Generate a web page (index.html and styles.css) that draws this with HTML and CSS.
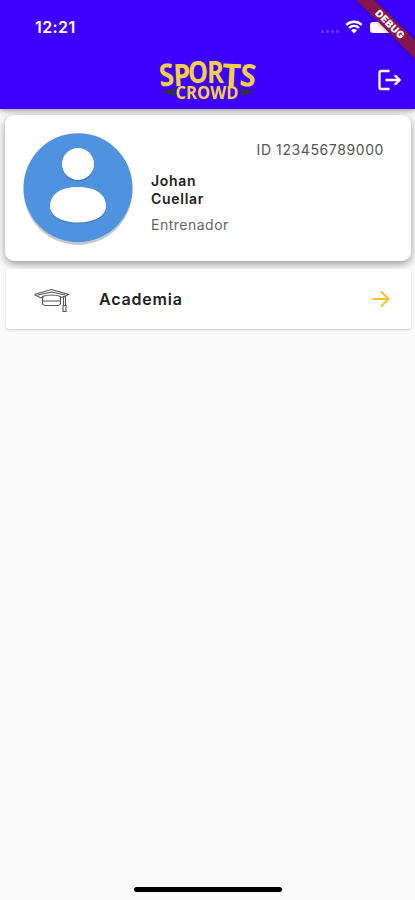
FILE: index.html
```html
<!DOCTYPE html>
<html lang="es">
<head>
    <meta charset="UTF-8">
    <meta name="viewport" content="width=device-width, initial-scale=1.0">
    <title>Sports Crowd</title>
    <link rel="stylesheet" href="styles.css">
</head>
<body>
    <div class="screen">
        <header class="header">
            <div class="status-bar">
                <span class="time">12:21</span>
                <div class="status-icons">
                    <div class="signal"><i></i><i></i><i></i><i></i></div>
                    <svg class="wifi" width="18" height="14" viewBox="0 0 18 14">
                        <path d="M1.3 4.9a11 11 0 0 1 15.4 0M4 8a7.1 7.1 0 0 1 10 0" fill="none" stroke="#fff" stroke-width="2.3"/>
                        <path d="M5.9 10.2a4.4 4.4 0 0 1 6.2 0L9 13.4z" fill="#fff"/>
                    </svg>
                    <div class="battery"></div>
                </div>
            </div>
            <div class="app-bar">
                <svg class="logo" width="100" height="44" viewBox="0 0 100 44">
                    <path d="M3 34l14-4v8zM97 34l-14-4v8z" fill="#343047"/>
                    <g class="logo-sports">
                        <text x="1" y="28" textLength="15" lengthAdjust="spacingAndGlyphs" transform="rotate(-5 8 18)">S</text>
                        <text x="15.5" y="28" textLength="17" lengthAdjust="spacingAndGlyphs" transform="rotate(-3 24 18)">P</text>
                        <text x="30" y="25" textLength="20" lengthAdjust="spacingAndGlyphs">O</text>
                        <text x="49" y="25" textLength="17" lengthAdjust="spacingAndGlyphs">R</text>
                        <text x="64" y="28" textLength="19" lengthAdjust="spacingAndGlyphs" transform="rotate(3 73 18)">T</text>
                        <text x="82" y="28.500" textLength="16" lengthAdjust="spacingAndGlyphs" transform="rotate(6 90 18)">S</text>
                    </g>
                    <text class="logo-crowd" x="17.500" y="40.500" textLength="63" lengthAdjust="spacingAndGlyphs">CROWD</text>
                </svg>
                <svg class="logout" width="24" height="22" viewBox="0 0 24 22" fill="none" stroke="#fff" stroke-width="2.300">
                    <path d="M12.500 2H4.200Q2.500 2 2.500 3.700V18.300Q2.500 20 4.200 20H12.500M8.500 11H22M17.800 6.300L22.500 11l-4.700 4.700"/>
                </svg>
            </div>
            <div class="debug-banner"><span>DEBUG</span></div>
        </header>

        <main class="content">
            <section class="profile-card">
                <svg class="avatar" width="110" height="113" viewBox="0 0 110 113">
                    <circle cx="55" cy="57.500" r="54.500" fill="#c9c9c9"/>
                    <circle cx="55" cy="54.700" r="54.500" fill="#4f92df"/>
                    <g fill="#3c74b5">
                        <circle cx="55" cy="32.500" r="15.800"/>
                        <path d="M27 75.500C27 62 39 56.500 55 56.500s28 5.500 28 19c0 8-11 15-28 15s-28-7-28-15z"/>
                    </g>
                    <g fill="#fff">
                        <circle cx="55" cy="31" r="16"/>
                        <path d="M27 73.500C27 60 39 54 55 54s28 6 28 19.500c0 9-11 16-28 16s-28-7-28-16z"/>
                    </g>
                </svg>
                <div class="profile-info">
                    <div class="profile-id">ID 123456789000</div>
                    <h1 class="profile-name">Johan<br>Cuellar</h1>
                    <div class="profile-role">Entrenador</div>
                </div>
            </section>

            <section class="menu-item">
                <svg class="cap" width="38" height="28" viewBox="0 0 38 28" fill="none" stroke="#555" stroke-width="1.100">
                    <path d="M1.500 7.500L18.500 2.500l17 5-5 2.500-3 .2M1.500 7.500l6 3.200 3-.3M5 8l13.500-3L32 8"/>
                    <path d="M9.500 9.500v7.500q1 1.500 3 1.500h12q2 0 3-1.500V9.500q-3-1.500-9-1.500t-9 1.500zM9.500 14h18"/>
                    <path d="M30.500 9v9M32.500 9v9M30 18.500h3v6h-3z"/>
                </svg>
                <span class="menu-label">Academia</span>
                <svg class="arrow" width="18" height="18" viewBox="0 0 18 18" fill="none" stroke="#fbc02d" stroke-width="2">
                    <path d="M.5 9H16M9 1.500L16.500 9 9 16.500"/>
                </svg>
            </section>
        </main>

        <div class="home-indicator"></div>
    </div>
</body>
</html>
```
FILE: styles.css
```css
* {
    margin: 0;
    padding: 0;
    box-sizing: border-box;
}

body {
    background-color: #fafafa;
    color: #222;
    font-family: Inter, "Liberation Sans", sans-serif;
}

.screen {
    height: 900px;
    display: flex;
    flex-direction: column;
    overflow: hidden;
}

/* Header */
.header {
    position: relative;
    height: 109px;
    background-color: #3d00ff;
    box-shadow: 0 2px 5px rgba(0, 0, 0, 0.35);
    overflow: hidden;
    flex: none;
}

.status-bar {
    height: 54px;
    display: flex;
    align-items: center;
    justify-content: space-between;
    padding: 0 19px 0 35px;
}

.time {
    color: #fff;
    font-size: 16px;
    font-weight: 600;
    letter-spacing: 0.4px;
}

.status-icons {
    display: flex;
    align-items: center;
}

.signal {
    display: flex;
    gap: 2px;
    margin: 9px 6px 0 0;
}

.signal i {
    width: 3px;
    height: 3px;
    border-radius: 1px;
    background-color: #6237ff;
}

.battery {
    width: 26px;
    height: 11px;
    margin-left: 7px;
    border-radius: 3px;
    background-color: #fff;
}

.app-bar {
    height: 55px;
    display: grid;
    grid-template-columns: 1fr 100px 1fr;
    padding: 4px 14px 0;
}

.logo {
    grid-column: 2;
    overflow: visible;
    font-family: "Open Sans", sans-serif;
    fill: #f3cf48;
}

.logo-sports {
    font-size: 31px;
    font-weight: 700;
}

.logo-crowd {
    font-size: 17.5px;
    font-weight: 700;
}

.logout {
    justify-self: end;
    margin-top: 11px;
}

.debug-banner {
    position: absolute;
    top: 18px;
    left: 330px;
    width: 120px;
    height: 13px;
    transform: rotate(45deg);
    background-color: #85154d;
    box-shadow: 0 0 5px rgba(0, 0, 0, 0.4);
    color: #fff;
    font-size: 10px;
    font-weight: 900;
    line-height: 13px;
    letter-spacing: 0.4px;
    text-align: center;
}

/* Content */
.content {
    padding: 6px 4px 0 5px;
    flex: 1;
}

.profile-card {
    display: flex;
    height: 146px;
    padding: 18px 27px 0 18px;
    border-radius: 9px;
    background-color: #fff;
    box-shadow: 0 3px 8px rgba(0, 0, 0, 0.4);
}

.avatar {
    flex: none;
}

.profile-info {
    flex: 1;
    margin-left: 18px;
}

.profile-id {
    margin-top: 8px;
    color: #555;
    font-size: 14px;
    line-height: 18px;
    letter-spacing: 0.6px;
    text-align: right;
}

.profile-name {
    margin-top: 13px;
    font-size: 14px;
    font-weight: 600;
    line-height: 18px;
    letter-spacing: 0.7px;
}

.profile-role {
    margin-top: 8px;
    color: #666;
    font-size: 14px;
    line-height: 18px;
    letter-spacing: 0.5px;
}

.menu-item {
    display: flex;
    align-items: center;
    height: 60px;
    margin: 8px 0 0 1px;
    padding: 0 21px 0 27px;
    border-radius: 3px;
    background-color: #fff;
    box-shadow: 0 1px 2px rgba(0, 0, 0, 0.2);
}

.cap {
    margin-top: 4px;
}

.menu-label {
    flex: 1;
    margin-left: 28px;
    font-size: 16px;
    font-weight: 600;
    letter-spacing: 0.8px;
}

.home-indicator {
    width: 148px;
    height: 5px;
    margin: 0 auto 8px;
    border-radius: 3px;
    background-color: #000;
}
```
